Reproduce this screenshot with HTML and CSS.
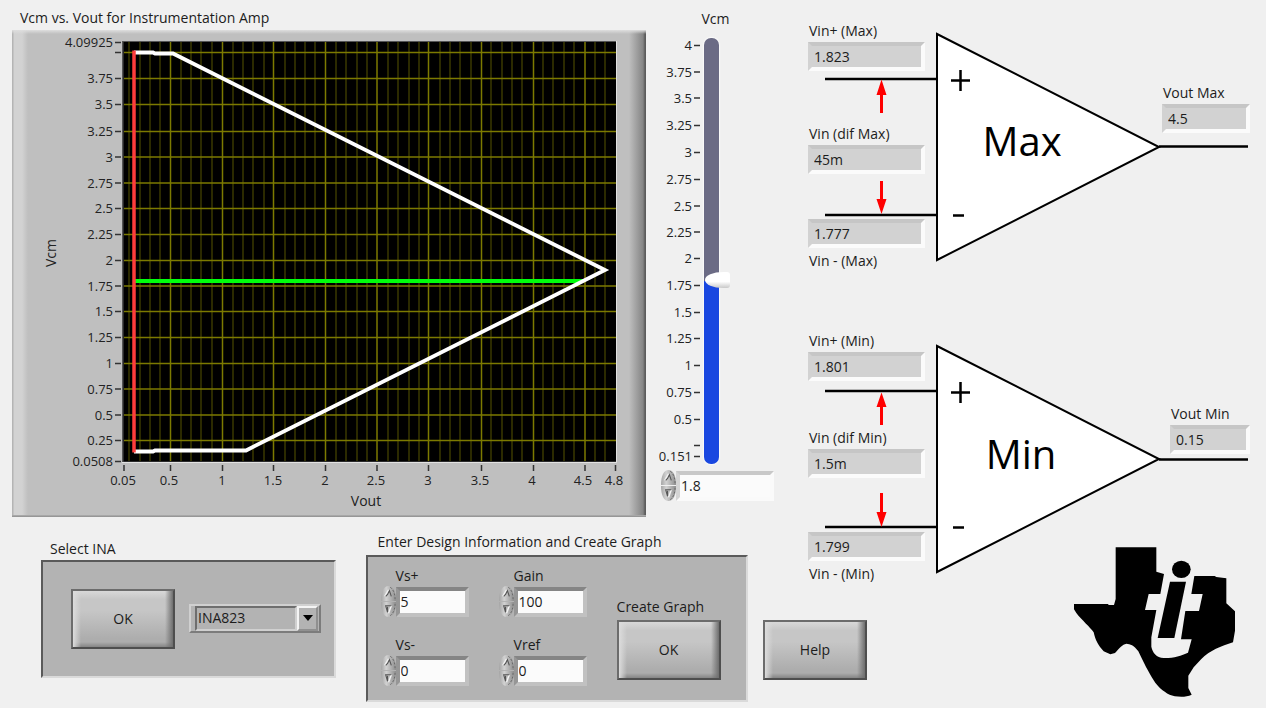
FILE: index.html
```html
<!DOCTYPE html>
<html lang="en">
<head>
<meta charset="utf-8">
<title>Vcm vs. Vout for Instrumentation Amp</title>
<link rel="stylesheet" href="styles.css">
</head>
<body>
<svg class="defs" width="0" height="0" aria-hidden="true">
  <defs>
    <linearGradient id="knob" x1="0" x2="1" y1="0" y2="0">
      <stop offset="0" stop-color="#a4a4a4"/><stop offset=".35" stop-color="#d2d2d2"/><stop offset="1" stop-color="#8c8c8c"/>
    </linearGradient>
    <symbol id="up" viewBox="0 0 16 16">
      <path d="M0 16C0 6 3 0 8 0s8 6 8 16z" fill="url(#knob)"/>
      <path d="M15 14C15 7 12 2 9 1" fill="none" stroke="#666" stroke-dasharray="2 2"/>
      <path d="M4 11L8 4" fill="none" stroke="#f4f4f4" stroke-width="1.5"/>
      <path d="M5 11L7 9L9 5L11 11" fill="none" stroke="#555" stroke-width="1.2"/>
    </symbol>
    <symbol id="down" viewBox="0 0 16 16">
      <path d="M0 0C0 10 3 16 8 16s8-6 8-16z" fill="url(#knob)"/>
      <path d="M15 2C15 9 12 14 8 15.500" fill="none" stroke="#666" stroke-dasharray="2 2"/>
      <path d="M11 4L8 12" fill="none" stroke="#f4f4f4" stroke-width="1.5"/>
      <path d="M11 4H5L7 11V5" fill="none" stroke="#555" stroke-width="1.2"/>
    </symbol>
  </defs>
</svg>
<main class="page">
  <section class="scope">
    <div class="chart">
      <h1 class="chart-title">Vcm vs. Vout for Instrumentation Amp</h1>
      <div class="chart-frame">
        <svg class="chart-plot" viewBox="12 30 634 487" role="img" aria-label="Vcm against Vout">
          <rect x="122" y="41" width="495" height="421" fill="#555"/>
          <path d="M122 462.500H616.500V41" fill="none" stroke="#e2e2e2"/>
          <rect x="123.500" y="42" width="492.500" height="419.500" fill="#000"/>
          <path class="minor" d="M129 42v419M140 42v419M150 42v419M160 42v419M181 42v419M191 42v419M201 42v419M212 42v419M233 42v419M243 42v419M253 42v419M264 42v419M285 42v419M295 42v419M305 42v419M315 42v419M336 42v419M346 42v419M357 42v419M367 42v419M388 42v419M398 42v419M409 42v419M419 42v419M440 42v419M450 42v419M460 42v419M471 42v419M491 42v419M502 42v419M512 42v419M522 42v419M543 42v419M553 42v419M564 42v419M574 42v419M595 42v419M605 42v419"/>
          <path class="major" d="M170.500 42v419M222.500 42v419M273.500 42v419M325.500 42v419M377 42v419M428.500 42v419M481.500 42v419M533.500 42v419M585 42v419M124 52.500h492M124 78.500h492M124 104.500h492M124 131.500h492M124 157h492M124 183h492M124 208.500h492M124 234.500h492M124 260.500h492M124 286h492M124 311.500h492M124 337.500h492M124 363.500h492M124 389h492M124 415h492M124 440.500h492"/>
          <path class="ticks" d="M115 42.500h6M115 52.500h6M115 78.500h6M115 104.500h6M115 131.500h6M115 157h6M115 183h6M115 208.500h6M115 234.500h6M115 260.500h6M115 286h6M115 311.500h6M115 337.500h6M115 363.500h6M115 389h6M115 415h6M115 440.500h6M115 461.500h6M124 465v6M170.500 465v6M222.500 465v6M273.500 465v6M325.500 465v6M377 465v6M428.500 465v6M481.500 465v6M533.500 465v6M585 465v6M615.500 465v6"/>
          <path d="M134 281H583" stroke="#00ff0c" stroke-width="4"/>
          <path d="M134 52.500H153L155 53.500H173L605 270L246 450.500H155L153 451.500H134" fill="none" stroke="#fff" stroke-width="3.800"/>
          <path d="M134 50.500V452.500" stroke="#ff3c3c" stroke-width="3.500"/>
          <g class="axis axis-y">
            <text x="113" y="47">4.09925</text><text x="113" y="83">3.75</text><text x="113" y="109">3.5</text><text x="113" y="136">3.25</text><text x="113" y="162">3</text><text x="113" y="188">2.75</text><text x="113" y="213">2.5</text><text x="113" y="239">2.25</text><text x="113" y="265">2</text><text x="113" y="291">1.75</text><text x="113" y="316">1.5</text><text x="113" y="342">1.25</text><text x="113" y="368">1</text><text x="113" y="394">0.75</text><text x="113" y="420">0.5</text><text x="113" y="445">0.25</text><text x="113" y="466">0.0508</text>
          </g>
          <g class="axis axis-x">
            <text x="123" y="485">0.05</text><text x="169" y="485">0.5</text><text x="222" y="485">1</text><text x="273" y="485">1.5</text><text x="325" y="485">2</text><text x="376" y="485">2.5</text><text x="428" y="485">3</text><text x="480" y="485">3.5</text><text x="532" y="485">4</text><text x="583" y="485">4.5</text><text x="614" y="485">4.8</text>
            <text class="axis-name" x="366" y="506">Vout</text>
            <text class="axis-name" transform="translate(56 253) rotate(-90)">Vcm</text>
          </g>
        </svg>
      </div>
    </div>
    <div class="vcm">
      <label class="vcm-title" for="vcm-range">Vcm</label>
      <div class="vcm-slider">
        <svg class="vcm-scale" width="55" height="428" viewBox="649 38 55 428" aria-hidden="true">
          <path class="ticks" d="M694 45.500h6M694 72h6M694 98h6M694 125.500h6M694 152.500h6M694 179.500h6M694 206h6M694 232h6M694 258.500h6M694 285.500h6M694 312.500h6M694 338.500h6M694 365.500h6M694 392.500h6M694 419.500h6M694 445.500h6M694 456.500h6"/>
          <g class="axis axis-y">
            <text x="692" y="50">4</text><text x="692" y="77">3.75</text><text x="692" y="103">3.5</text><text x="692" y="130">3.25</text><text x="692" y="157">3</text><text x="692" y="184">2.75</text><text x="692" y="211">2.5</text><text x="692" y="237">2.25</text><text x="692" y="263">2</text><text x="692" y="290">1.75</text><text x="692" y="317">1.5</text><text x="692" y="343">1.25</text><text x="692" y="370">1</text><text x="692" y="397">0.75</text><text x="692" y="424">0.5</text><text x="692" y="461">0.151</text>
          </g>
        </svg>
        <input class="range" id="vcm-range" type="range" min="0.151" max="4" step="0.001" value="1.8">
      </div>
      <div class="spin spin-light">
        <span class="spin-buttons">
          <button type="button" aria-label="Increase Vcm"><svg><use href="#up"/></svg></button>
          <button type="button" aria-label="Decrease Vcm"><svg><use href="#down"/></svg></button>
        </span>
        <input class="spin-input" type="text" inputmode="decimal" value="1.8" aria-label="Vcm value">
      </div>
    </div>
  </section>

  <section class="diagrams">
    <div class="amp amp-max">
      <svg class="amp-art" width="444" height="250" viewBox="808 21 444 250" aria-hidden="true">
        <path d="M937 34V260L1159 147z" fill="#fff" stroke="#000" stroke-width="2"/>
        <path d="M825 79H937M825 215H937M1159 146.500H1248" stroke="#000" stroke-width="2.500"/>
        <path d="M951 80.500H970M960.500 70V91M953 215.500H964" stroke="#000" stroke-width="2.500"/>
        <path d="M881.500 113V90M881.500 181V203" stroke="#f00" stroke-width="3"/>
        <path d="M881.500 79.500L886.500 95H876.500zM881.500 214L886.500 199H876.500z" fill="#f00"/>
        <text class="amp-name" x="1022" y="156">Max</text>
      </svg>
      <div class="amp-inputs">
        <label for="vip-max">Vin+ (Max)</label>
        <input class="readout" id="vip-max" value="1.823" readonly>
        <label class="dif" for="vid-max">Vin (dif Max)</label>
        <input class="readout" id="vid-max" value="45m" readonly>
        <input class="readout low" id="vim-max" value="1.777" readonly>
        <label class="below" for="vim-max">Vin - (Max)</label>
      </div>
      <div class="amp-output">
        <label for="vo-max">Vout Max</label>
        <input class="readout" id="vo-max" value="4.5" readonly>
      </div>
    </div>
    <div class="amp amp-min">
      <svg class="amp-art" width="444" height="250" viewBox="808 331 444 250" aria-hidden="true">
        <path d="M937 346V572L1159 459z" fill="#fff" stroke="#000" stroke-width="2"/>
        <path d="M825 391H937M825 527H937M1159 459.500H1248" stroke="#000" stroke-width="2.500"/>
        <path d="M951 392.500H970M960.500 382V403M953 527.500H964" stroke="#000" stroke-width="2.500"/>
        <path d="M881.500 425V404M881.500 493V516" stroke="#f00" stroke-width="3"/>
        <path d="M881.500 392.500L886.500 407H876.500zM881.500 527L886.500 512H876.500z" fill="#f00"/>
        <text class="amp-name" x="1021" y="469">Min</text>
      </svg>
      <div class="amp-inputs">
        <label for="vip-min">Vin+ (Min)</label>
        <input class="readout" id="vip-min" value="1.801" readonly>
        <label class="dif" for="vid-min">Vin (dif Min)</label>
        <input class="readout" id="vid-min" value="1.5m" readonly>
        <input class="readout low" id="vim-min" value="1.799" readonly>
        <label class="below" for="vim-min">Vin - (Min)</label>
      </div>
      <div class="amp-output">
        <label for="vo-min">Vout Min</label>
        <input class="readout" id="vo-min" value="0.15" readonly>
      </div>
    </div>
  </section>

  <section class="controls">
    <div class="group group-ina">
      <h2 class="group-title">Select INA</h2>
      <div class="panel panel-ina">
        <button class="push" type="button">OK</button>
        <div class="combo">
          <select class="combo-select" aria-label="Select INA"><option>INA823</option></select>
          <span class="combo-arrow"></span>
        </div>
      </div>
    </div>
    <div class="group group-design">
      <h2 class="group-title">Enter Design Information and Create Graph</h2>
      <div class="panel panel-design">
        <div class="params">
          <div class="param">
            <label for="vsp">Vs+</label>
            <div class="spin">
              <span class="spin-buttons">
                <button type="button" aria-label="Increase Vs+"><svg><use href="#up"/></svg></button>
                <button type="button" aria-label="Decrease Vs+"><svg><use href="#down"/></svg></button>
              </span>
              <input class="spin-input" id="vsp" type="text" value="5">
            </div>
          </div>
          <div class="param">
            <label for="gain">Gain</label>
            <div class="spin">
              <span class="spin-buttons">
                <button type="button" aria-label="Increase Gain"><svg><use href="#up"/></svg></button>
                <button type="button" aria-label="Decrease Gain"><svg><use href="#down"/></svg></button>
              </span>
              <input class="spin-input" id="gain" type="text" value="100">
            </div>
          </div>
          <div class="param">
            <label for="vsm">Vs-</label>
            <div class="spin">
              <span class="spin-buttons">
                <button type="button" aria-label="Increase Vs-"><svg><use href="#up"/></svg></button>
                <button type="button" aria-label="Decrease Vs-"><svg><use href="#down"/></svg></button>
              </span>
              <input class="spin-input" id="vsm" type="text" value="0">
            </div>
          </div>
          <div class="param">
            <label for="vref">Vref</label>
            <div class="spin">
              <span class="spin-buttons">
                <button type="button" aria-label="Increase Vref"><svg><use href="#up"/></svg></button>
                <button type="button" aria-label="Decrease Vref"><svg><use href="#down"/></svg></button>
              </span>
              <input class="spin-input" id="vref" type="text" value="0">
            </div>
          </div>
        </div>
        <div class="create">
          <label for="create">Create Graph</label>
          <button class="push" id="create" type="button">OK</button>
        </div>
      </div>
    </div>
  </section>

  <div class="help"><button class="push" type="button">Help</button></div>

  <svg class="logo" width="163" height="152" viewBox="40 46 489 456" role="img" aria-label="Texas Instruments">
    <path d="M168 50H290V123L313 130L302 190H267L256 238H290L275 320V348C279 366 290 381 312 382C340 383 365 375 385 366L396 326H364L377 241H418L429 190H395L404 136H465L470 139L500 143V218L526 242V300L520 335C485 346 450 360 425 385L402 410L386 435V472L396 492C375 502 345 498 330 492C310 482 292 465 283 450C265 422 253 398 236 362C222 343 212 340 200 339C188 341 180 352 166 367L152 371L132 362C116 345 107 328 102 305C92 290 66 268 50 247L43 236V220H146V223H163L168 205z"/>
    <path d="M331 153H379L344 322H294z"/>
    <ellipse cx="365" cy="116" rx="28" ry="26"/>
  </svg>
</main>
</body>
</html>
```

FILE: styles.css
```css
* { box-sizing: border-box; }

body {
  margin: 0;
  background: #f0f0f0;
  color: #1c1c1c;
  font: 14px/20px "Open Sans", "Noto Sans", sans-serif;
}

button, input, select { font: inherit; color: inherit; }
h1, h2 { margin: 0; font: inherit; }
label { display: block; white-space: nowrap; }
.defs { position: absolute; }

.page {
  display: grid;
  grid-template-columns: 756fr 52fr 192fr 266fr;
  grid-template-rows: auto 64px auto;
}

/* Graph and slider */
.scope {
  grid-area: 1 / 1 / 2 / 3;
  display: flex;
  gap: 3px;
  padding-left: 12px;
}
.chart { flex: 1; padding-top: 8px; }
.chart-title { padding-left: 8px; margin-bottom: 2px; }
.chart-frame {
  background:
    linear-gradient(#dedede, #bfbfbf00) top / 100% 4px no-repeat,
    linear-gradient(#b0b0b0, #8e8e8e) bottom / 100% 2px no-repeat,
    linear-gradient(to right, #b4b4b4 1px, #d2d2d2 2px, #d2d2d2 10px, #bfbfbf 16px, #bfbfbf00 17px),
    linear-gradient(to left, #5c5c5c 1px, #858585 3px, #bfbfbf 17px);
}
.chart-plot { display: block; width: 100%; }
.minor { stroke: #3a3900; stroke-width: 1.5; }
.major { stroke: #7c7a00; stroke-width: 1.5; }
.ticks { stroke: #333; stroke-width: 1.5; }
.axis { font-size: 13px; fill: #222; }
.axis-y { text-anchor: end; }
.axis-x { text-anchor: middle; }
.axis-name { font-size: 14px; }

.vcm { width: 159px; padding-top: 9px; }
.vcm-title { width: 133px; margin-bottom: 9px; text-align: center; }
.vcm-slider { display: flex; align-items: flex-start; margin-bottom: 4px; }
.vcm-scale { display: block; }
.range {
  appearance: none;
  writing-mode: vertical-lr;
  direction: rtl;
  width: 15px;
  height: 426px;
  margin: 0;
  background: none;
}
.range::-webkit-slider-runnable-track {
  width: 15px;
  height: 426px;
  border-radius: 7px;
  background: linear-gradient(#6b6b85 57%, #1947e0 57%);
  box-shadow: 0 0 1px 1px #fafafa;
}
.range::-webkit-slider-thumb {
  appearance: none;
  width: 25px;
  height: 16px;
  margin-left: 1px;
  border-radius: 18px 3px 3px 18px / 8px 3px 3px 8px;
  background: linear-gradient(#fff 60%, #c9c9c9);
}

/* Numeric entry with spinner */
.spin { display: flex; align-items: center; }
.spin-buttons { display: flex; flex-direction: column; gap: 1px; width: 15px; }
.spin-buttons button { display: block; padding: 0; border: 0; background: none; }
.spin-buttons svg { display: block; width: 15px; height: 15px; }
.spin-input {
  width: 73px;
  height: 30px;
  padding: 0 0 0 1px;
  border: 4px solid;
  border-color: #858585 #c1c1c1 #c1c1c1 #969696;
  background: #fbfbfb;
}
.spin-light { padding-left: 12px; }
.spin-light .spin-input {
  width: 98px;
  border-color: #c8c8c8 #fafafa #fafafa #d4d4d4;
}

/* Amplifier diagrams */
.diagrams { grid-area: 1 / 3 / 3 / 5; padding-top: 21px; }
.amp {
  display: grid;
  grid-template-columns: 117px 325px;
  height: 310px;
}
.amp-min { height: auto; }
.amp-art { grid-area: 1 / 1 / 2 / 3; display: block; }
.amp-name { font-size: 40px; text-anchor: middle; fill: #000; }
.amp-inputs { grid-area: 1 / 1; z-index: 1; }
.amp-inputs label { padding-left: 1px; margin-bottom: 1px; }
.readout {
  display: block;
  width: 117px;
  height: 29px;
  padding: 0 0 0 2px;
  border: 4px solid;
  border-color: #c6c6c6 #fbfbfb #fbfbfb #d2d2d2;
  background: #d2d2d2;
}
.amp-inputs .dif { margin-top: 53px; }
.low { margin-top: 45px; }
.amp-inputs .below { margin: 3px 0 0; }
.amp-min .dif { margin-top: 47px; }
.amp-min .low { margin-top: 54px; }
.amp-output { grid-area: 1 / 2; justify-self: end; z-index: 1; padding-top: 62px; }
.amp-output label { padding-left: 1px; margin-bottom: 1px; }
.amp-output .readout { width: 88px; }
.amp-min .amp-output { padding-top: 73px; }
.amp-min .amp-output .readout { width: 80px; }

/* Control panels */
.controls {
  grid-area: 2 / 1 / 4 / 2;
  display: flex;
  align-items: flex-start;
  gap: 30px;
  padding: 12px 8px 6px 41px;
}
.group-ina { flex: 295; padding-top: 7px; }
.group-design { flex: 383; }
.group-ina .group-title { padding-left: 9px; margin-bottom: 1px; }
.group-design .group-title { padding-left: 12px; margin-bottom: 3px; }
.panel {
  display: flex;
  border: 2px solid;
  border-color: #5a5a5a #dadada #dadada #5a5a5a;
  background: #b3b3b3;
}
.panel-ina { align-items: center; gap: 14px; height: 118px; padding: 0 12px 0 28px; }
.push {
  display: block;
  width: 104px;
  height: 60px;
  border: 2px solid;
  border-color: #6c6c6c #4e4e4e #4e4e4e #6c6c6c;
  background:
    linear-gradient(to right, #dcdcdc, #c8c8c800) left / 8px 100% no-repeat,
    linear-gradient(to left, #6e6e6e, #b4b4b400) right / 8px 100% no-repeat,
    linear-gradient(to top, #858585, #b4b4b400) bottom / 100% 5px no-repeat,
    linear-gradient(#d8d8d8, #c6c6c6 15%, #c6c6c6 35%, #adadad 85%);
}
.combo {
  display: flex;
  width: 132px;
  height: 29px;
  margin-bottom: 2px;
  padding: 0 1px 0 4px;
  border: 2px solid;
  border-color: #d0d0d0 #7c7c7c #7c7c7c #d0d0d0;
}
.combo-select {
  appearance: none;
  width: 102px;
  padding: 0 0 2px 1px;
  border: 2px solid;
  border-color: #6e6e6e #d0d0d0 #d0d0d0 #6e6e6e;
  border-radius: 0;
  background: #b3b3b3;
}
.combo-arrow {
  display: grid;
  place-items: center;
  flex: 1;
  border: 2px solid;
  border-color: #f4f4f4 #909090 #909090 #f4f4f4;
}
.combo-arrow::before {
  content: "";
  border: 5px solid transparent;
  border-top: 6px solid #000;
  border-bottom: 0;
}
.panel-design { gap: 30px; height: 147px; padding: 9px 15px 0 13px; }
.params { display: grid; grid-template-columns: 118px 88px; row-gap: 18px; align-content: start; }
.param label { padding-left: 15px; }
.create { padding-top: 31px; }
.create label { margin-bottom: 3px; }

.help { grid-area: 3 / 2 / 4 / 4; padding: 36px 0 0 7px; }
.logo { grid-area: 2 / 4 / 4 / 5; justify-self: end; margin: 26px 30px 0 0; }
```
